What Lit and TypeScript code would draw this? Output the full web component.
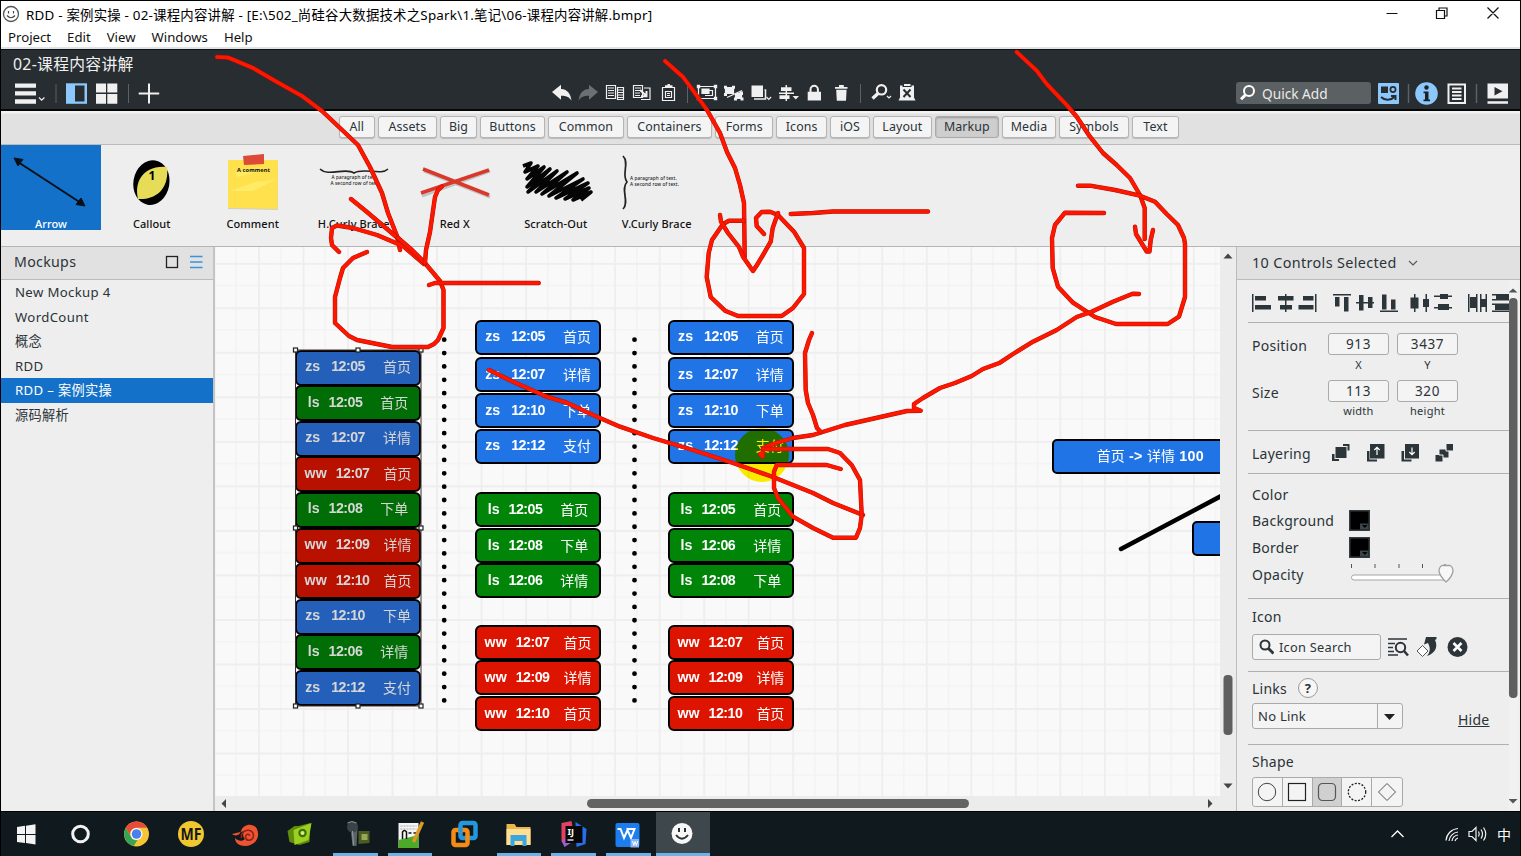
import { LitElement, html, svg, css } from "lit";
import { customElement } from "lit/decorators.js";
import { classMap } from "lit/directives/class-map.js";
import { styleMap } from "lit/directives/style-map.js";

type Tone = "blue" | "green" | "red";
type Row = [string, string, string];

const toneOf = (user: string): Tone => (user === "zs" ? "blue" : user === "ls" ? "green" : "red");

const A = "首页", B = "详情", C = "下单", D = "支付";

const events: Row[] = [
  ["zs", "12:05", A], ["ls", "12:05", A], ["zs", "12:07", B], ["ww", "12:07", A], ["ls", "12:08", C],
  ["ww", "12:09", B], ["ww", "12:10", A], ["zs", "12:10", C], ["ls", "12:06", B], ["zs", "12:12", D],
];

const zs: Row[] = [["zs", "12:05", A], ["zs", "12:07", B], ["zs", "12:10", C], ["zs", "12:12", D]];
const ww: Row[] = [["ww", "12:07", A], ["ww", "12:09", B], ["ww", "12:10", A]];
const grouped: Row[] = [...zs, ["ls", "12:05", A], ["ls", "12:08", C], ["ls", "12:06", B], ...ww];
const sorted: Row[] = [...zs, ["ls", "12:05", A], ["ls", "12:06", B], ["ls", "12:08", C], ...ww];
const groupTops = [319.6, 357.3, 393, 428.6, 492.3, 527.8, 563.4, 624.8, 660.4, 696];

const tabs: [string, number][] = [
  ["All", 35.7], ["Assets", 59.3], ["Big", 37], ["Buttons", 65], ["Common", 76], ["Containers", 85], ["Forms", 58.4],
  ["Icons", 50.6], ["iOS", 40], ["Layout", 58.7], ["Markup", 64.3], ["Media", 54], ["Symbols", 70], ["Text", 47],
];

/* Pen strokes drawn over the whole window, in window coordinates. */
const strokes = [
  "217,57 228,57.5 253,68 277,82 302,96 322,111 340,128 358,145 370,167 382,193 388,213 397,236 400,250",
  "351,199 367,212 400,240 424,262 440,281 443.5,290 443.5,328 438,340 434,344 428,347 392,347 357,340 349,336 335,323 335,297 340,278 343,268 353,258 367,252",
  "339,252 332,245 331,238 332,228 337,225.5 353,228 377,235 403,246 424,264",
  "398,238 412,250 425,263",
  "441.7,186.7 438,190 435,197 432.7,213 430,232 426,250 425,263",
  "429,285 435,283 538.7,283",
  "665,61 683,77 692,89 707,110 720,133 727,152 735,168 740,185 744,203 744.7,257",
  "744,220.7 729,220.7 723,224 712,240 708.7,253 706.7,277 710.7,297 725,310.7 738,316 781.7,316 793,308 804,294 804,248 794,231.7 778,215 770,211.7 761.7,212 756,218 756.7,226 764,234",
  "720,215 721,221.7 728,233 739,247 743,256.7 753,271 757,265 763,255 770.7,241.7 772.7,228 778,213",
  "790.7,214 813,213 833,211.5 928,211.5",
  "1016.7,52 1036.7,70.7 1046.7,84 1066.7,105 1076.7,116.7 1090,136.7 1103,153 1116.7,165 1130,178 1140,195 1144.7,208 1144.7,239",
  "1135,226.7 1136,234 1146.7,251.5 1149.5,251.5 1150.7,240 1153,230",
  "1078,185.7 1090,185.7 1115,190 1140,195.7 1155,201.7 1166.7,214 1178,225 1184,238 1185,244 1185,297 1179,316.7 1167.7,324 1116,324 1095,317 1073,302.7 1058,286.7 1052.7,268 1052,238 1055,225 1065,212.7 1104,213",
  "1139,294 1132.7,293.7 1113,301.7 1091.7,311.7 1076.7,317 1056.7,330 1033,341.7 1013,354 1000,362.7 983,369 971.7,376 955,383 940,388 923,398 914,404 914,408 920.7,410.7 907,411 845,425 813,435 793,438 773,444 763,448 762.7,456.7 760,454",
  "812,333 809,340 805,353 805.7,390 808,403 813,415 817,428 820.7,431.7",
  "489,370 513,381.7 546.7,396.7 566.7,402.7 593,415 620,426.7 653,438 693,450 733,463 773,477 813,493 833,503 863,515",
  "763,449 828,449 840,453 851.7,465 860,480 861.7,515 860,528 856,537.7 833,537.7 813,528 793,516.7 778,498 774,488 774,471.7 776.7,465 826.7,465 840.7,469",
];

@customElement("event-card")
class EventCard extends LitElement {
  static properties = { row: { attribute: false }, selected: { type: Boolean } };
  declare row: Row;
  declare selected: boolean;
  static styles = css`
    :host { display: block; }
    .card { box-sizing: border-box; width: 125.5px; height: 35px; border: 2px solid #000; border-radius: 6px; color: #fff; padding-bottom: 1.5px;
      display: flex; align-items: center; justify-content: center; font: bold 14.2px "Liberation Sans", sans-serif; white-space: pre; }
    .blue { background: #2074e6; } .green { background: #008509; } .red { background: #dd1400; }
    .user { margin-right: 11px; }
    .green .user { margin-right: 9px; }
    .red .user { margin-right: 9px; }
    .time { letter-spacing: -0.5px; margin-right: 18px; }
    .red .time { margin-right: 14px; }
    .act { font: 14px "Noto Sans CJK SC", sans-serif; line-height: 20px; }
    .selected { color: #d6d6d6; height: 36px; padding-bottom: 3px; }
    .selected.blue { background: #2460b9; } .selected.green { background: #006d06; } .selected.red { background: #b81100; }
  `;
  render() {
    const [user, time, act] = this.row;
    return html`<div class=${classMap({ card: true, [toneOf(user)]: true, selected: this.selected })}><span class="user">${user}</span><span class="time">${time}</span><span class="act">${act}</span></div>`;
  }
}

@customElement("app-root")
class AppRoot extends LitElement {
  static styles = css`
    :host { display: block; }
    * { box-sizing: border-box; }
    svg { display: block; flex: none; }
    .win { position: relative; width: 1521px; height: 856px; overflow: hidden; background: #eee; border: 1px solid #000; border-bottom: 0;
      display: flex; flex-direction: column; font-family: "Noto Sans", "Noto Sans CJK SC", sans-serif; color: #2b3338; }
    .title { height: 25px; background: #fff; color: #000; display: flex; align-items: center; font-size: 13.4px; justify-content: space-between; flex: none; }
    .title .name { display: flex; align-items: center; gap: 6px; padding-left: 1px; letter-spacing: 0.22px; white-space: pre; }
    .menu { height: 23px; background: #fff; color: #111; display: flex; gap: 16px; padding: 1px 0 0 7px; font-size: 13.2px; line-height: 21px; border-bottom: 2px solid #dfe3e5; flex: none; }
    .dark { height: 62px; background: #272d31; border-top: 1px solid #0e1214; border-bottom: 2px solid #050606; flex: none; color: #fff; display: flex; flex-direction: column; }
    .doc { height: 30px; padding: 2px 0 0 12px; font-size: 15.8px; letter-spacing: 0.3px; line-height: 24px; color: #f0f0f0; }
    .tools { height: 28px; display: flex; }
    .quick { display: flex; align-items: center; margin-top: 2px; width: 135px; height: 22px; border-radius: 3px; background: #5b6063; color: #eaeaea; font-size: 13.7px; gap: 6px; padding-left: 4px; }
    .rtools { display: flex; margin-left: auto; }
    .tabs { height: 34px; background: linear-gradient(#f2f2f2 0 2px, #e1e1e1 3px); border-bottom: 1px solid #bbb; display: flex; gap: 3px; padding: 5px 0 0 338px; flex: none; }
    .tab { height: 22px; flex: none; border: 1px solid #b4b4b4; border-radius: 3px; background: #f4f4f4; box-shadow: 0 1px 1px #bbb; font-size: 12.4px; line-height: 19px; text-align: center; letter-spacing: 0.1px; white-space: nowrap; }
    .tab.on { background: #cecece; box-shadow: inset 0 1px 2px #999; border-color: #aaa; }
    .lib { height: 102px; display: flex; border-bottom: 1px solid #b5b5b5; flex: none; }
    .item { width: 101px; height: 85px; display: flex; flex-direction: column; align-items: center; color: #111; font-size: 11px; line-height: 14px; font-weight: 500; letter-spacing: 0.1px; white-space: nowrap; padding-right: 1.5px; }
    .item.sel { background: #1471c9; color: #fff; width: 100px; margin-right: 1px; padding: 0; }
    .item svg { height: 72px; }
    .main { height: 564px; display: flex; flex: none; }
    .side { width: 214px; border-right: 2px solid #c4c4c4; font-size: 13.2px; flex: none; }
    .shead { height: 33px; background: #e1e1e1; border-bottom: 1px solid #bbb; display: flex; align-items: center; padding: 0 9px 3px 13px; font-size: 14.2px; letter-spacing: 0.3px; justify-content: space-between; }
    .row { height: 24.5px; padding-left: 14px; line-height: 24px; letter-spacing: 0.35px; }
    .row.on { background: #1471c9; color: #fff; }
    .work { width: 1022px; display: flex; flex-direction: column; border-right: 1px solid #bcbcbc; flex: none; }
    .wtop { display: flex; height: 549px; }
    .canvas { position: relative; width: 1005px; height: 549px; overflow: hidden; background: #f9f9f9; isolation: isolate; flex: none; }
    .layer { position: absolute; left: 0; top: 0; }
    event-card { position: absolute; }
    .wide { position: absolute; height: 35px; border: 2px solid #000; border-radius: 5px; background: #2074e6; color: #fff; font: bold 14.3px "Liberation Sans", sans-serif; line-height: 31px; text-align: center; white-space: pre; letter-spacing: 0.3px; }
    .cjk { font: 14px "Noto Sans CJK SC", sans-serif; letter-spacing: 0; line-height: 20px; }
    .spot { position: absolute; left: 519.5px; top: 181px; width: 54px; height: 54px; border-radius: 50%; background: #fff000; mix-blend-mode: multiply; }
    .hbar { height: 15px; background: #ececec; }
    .props { width: 283px; }
    .phead { height: 33px; background: #e1e1e1; border-bottom: 1px solid #bbb; display: flex; align-items: center; gap: 11px; padding: 0 0 1px 15px; font-size: 14.4px; letter-spacing: 0.35px; white-space: nowrap; }
    .pbody { display: flex; height: 531px; overflow: hidden; }
    .psecs { width: 272px; padding-left: 11px; font-size: 14px; letter-spacing: 0.25px; }
    .sec { border-bottom: 1px solid #b0b0b0; padding-left: 4px; overflow: hidden; }
    .s43 { height: 43px; } .s108 { height: 108px; padding-top: 10px; } .s125 { height: 125px; padding-top: 7px; } .s73 { height: 73px; padding-top: 6px; }
    .line { display: flex; align-items: center; }
    .lab { width: 76px; height: 20px; line-height: 24px; }
    .wlab { width: 97px; }
    .h26 { height: 26px; } .h27 { height: 27px; line-height: 20px; }
    .t2 { margin-top: 2px; } .t3 { margin-top: 3px; } .t4 { margin-top: 4px; } .t5 { margin-top: 5px; } .t8 { margin-top: 8px; }
    .num { width: 61px; height: 22px; border: 1px solid #aaa; border-radius: 3px; background: #f4f4f4; text-align: center; font-size: 13.5px; line-height: 20px; letter-spacing: 0.6px; margin-right: 8px; }
    .sub { width: 61px; margin-right: 8px; text-align: center; font-size: 11px; line-height: 14px; }
    .sub.gap { width: 76px; margin: 0; }
    .field { height: 26px; width: 129px; border: 1px solid #aaa; border-radius: 3px; background: #f4f4f4; display: flex; align-items: center; font-size: 12.8px; gap: 5px; padding-left: 6px; white-space: nowrap; }
    .help { width: 20px; height: 20px; border: 1px solid #999; border-radius: 50%; background: #f6f6f6; text-align: center; font-weight: bold; font-size: 13px; line-height: 18px; margin-left: 11px; }
    .select { width: 151px; height: 26px; border: 1px solid #aaa; border-radius: 3px; background: #f4f4f4; display: flex; align-items: center; justify-content: space-between; font-size: 13px; padding-left: 5px; }
    .hide { text-decoration: underline; margin-left: 55px; margin-top: 6px; }
    .last { padding: 6px 0 0 4px; line-height: 21px; }
    .shapes { display: flex; width: 151px; height: 30px; border: 1px solid #aaa; border-radius: 3px; background: #f4f4f4; margin-top: 5px; }
    .shape { width: 30px; height: 28px; border-right: 1px solid #aaa; display: flex; align-items: center; justify-content: center; }
    .shape:last-child { border: 0; }
    .shape.on { background: #d0d0d0; }
    .task { height: 45px; background: #10191d; border-top: 1px solid #000; flex: none; display: flex; justify-content: space-between; }
    .apps { display: flex; }
    .app { width: 54.55px; height: 44px; display: flex; flex-direction: column; align-items: center; padding: 0 5px; }
    .app svg { height: 41px; }
    .run { border-bottom: 3px solid #6cb2e6; width: 44.55px; margin: 0 5px; padding: 0; }
    .cur { background: #3e474c; border-bottom: 3px solid #6cb2e6; width: 54px; }
    .tray { display: flex; align-items: center; color: #fff; font-size: 14px; padding-right: 9px; }
    .ink { position: absolute; left: -1px; top: -1px; pointer-events: none; }
  `;

  private dark(body: unknown, x: number, w: number) {
    return html`<svg width=${w} height="28" viewBox="${x} 80 ${w} 28">${body}</svg>`;
  }

  private header() {
    const W = "#f0f0f0";
    return html`<div class="dark">
      <div class="doc">02-课程内容讲解</div>
      <div class="tools">
        ${this.dark(svg`
          <path fill=${W} d="M15 83.500h21v4.200H15zM15 91.200h21v4.400H15zM15 99.300h21v4.400H15zM96 83.500h10v9H96zM107.300 83.500h10v9h-10zM96 94h10v9.800H96zM107.300 94h10v9.800h-10z"/>
          <path d="M39 97.500l2.700 2.700 2.700-2.700" fill="none" stroke=${W} stroke-width="1.200"/>
          <path d="M138.700 93.500h20.500M149 83.500v20" stroke=${W} stroke-width="2"/>
          <path d="M56 84v19M128.500 84v19" stroke="#5b6165"/>
          <rect x="66" y="83.300" width="21" height="20.500" fill="#8cc8fb"/><rect x="75" y="85.500" width="9.500" height="16" fill="#272d31"/>`, 1, 549)}
        ${this.dark(svg`
          <path fill=${W} d="M552 92l9-7.300v4.300c7 .5 9.500 5 10.500 11.500-3-4-6-4.800-10.500-4.700v4z"/>
          <path fill="#6b7073" d="M598 92l-9-7.300v4.300c-7 .5-9.500 5-10.500 11.500 3-4 6-4.800 10.500-4.700v4z"/>
          <g fill="none" stroke=${W} stroke-width="1.200">
            <path d="M606.500 85.500h9v13h-9zM617.500 87.500h6v12h-6zM608 88h6M608 90.500h6M608 93h6M608 95.500h6M618 90h5M618 92.500h5M618 95h5M618 97.500h5"/>
            <path d="M633.500 85.500h9v12h-9zM635 88h6M635 90.500h5M635 93h5M635 95.500h5M644 88h6v11.500h-9"/><path d="M640 90l6.500 6M646.500 91v5.300H641" stroke-width="2"/>
            <path d="M662.500 87.500h12v13h-12zM665.500 91.500h6v6h-6zM667 93.500h3M667 95.500h3"/><path d="M665 86.500h7.500M668.700 84v3" stroke-width="2.400"/>
            <path d="M698.500 86.500h17v12h-17z"/><path d="M705 95.500h7.500v-5H709"/><path d="M702 89h7v4.500h-7z" fill=${W}/>
            <path d="M725.500 87.500h8v6h-8zM735.500 93.500h6v5h-6z" fill=${W}/><path d="M727 97.500l15-7"/>
            <path d="M764.500 90h1v9H754" stroke-width="1.500"/><path d="M766.500 97l2.300 2.300 2.300-2.300M887 96l2 2 2-2"/>
            <path d="M786.300 85v16M779 93.300h15" stroke-width="1.500"/>
            <path d="M810.500 93v-3.500a3.700 3.700 0 0 1 7.400 0v3.500" stroke-width="2"/>
            <circle cx="881.500" cy="89.800" r="4.700" stroke-width="2.200"/><path d="M878 93.500l-5.500 5" stroke-width="3.400"/>
          </g>
          <g fill=${W}><path d="M696.800 84.800h3.400v3.400h-3.400zM713.800 84.800h3.400v3.400h-3.400zM696.800 96.800h3.400v3.400h-3.400zM713.800 96.800h3.400v3.400h-3.400zM724 85.800h3v3h-3zM732 85.800h3v3h-3zM724 93h3v3h-3zM739.500 91.500h3.500v3.500h-3.500zM734 97.500h3v3h-3zM740.500 97.500h3v3h-3z"/>
            <path d="M751.500 85.500h11.500v11.500h-11.500zM781 87.300h10.500v3.800H781zM779.500 95.300h10v3.800h-10zM792.500 96h6.500l-3.200 3.500zM807.700 91.800h13.300v8.800h-13.300zM835 87h12.500v1.700H835zM839 85h4.800v2H839zM836.200 89.800h10.400l-.6 11h-9.200z"/>
            <path d="M900 85.500h14v12l1.500 3h-17l1.500-3z"/></g>
          <path d="M903.500 89.500l7 7.500M910.500 89.500l-7 7.500M902.500 86h9" stroke="#272d31" stroke-width="2" fill="none"/><path d="M904 85h6.500" stroke=${W} stroke-width="2"/>
          <path d="M687.500 84v19M860.500 84v19" stroke="#5b6165"/>`, 550, 368)}
        <div class="rtools">
          <div class="quick"><svg width="16" height="18" viewBox="0 0 16 18"><circle cx="9" cy="7" r="5" fill="none" stroke="#fff" stroke-width="2"/><path d="M5.500 10.800L1 15.300" stroke="#fff" stroke-width="3"/></svg>Quick Add</div>
          ${this.dark(svg`
            <rect x="1378" y="83" width="21" height="21" rx="1" fill="#8cc8fb"/><path d="M1381 86.500h7v6.500h-7z" fill="#272d31"/><circle cx="1393" cy="89.500" r="2.600" fill="none" stroke="#272d31" stroke-width="1.700"/><path d="M1381 97c4 4 10 3.500 14-.5M1391 96h4.500v4" fill="none" stroke="#272d31" stroke-width="2"/>
            <path d="M1408.500 84v19M1476.500 84v19" stroke="#5b6165" stroke-width="1.500"/>
            <circle cx="1426.500" cy="93.500" r="11.300" fill="#8cc8fb"/><circle cx="1426.500" cy="87.500" r="2.200" fill="#1c2226"/><path d="M1423.500 91.500h5v8h1.500v1.700h-6.500v-1.700h1.500v-6.300h-1.500z" fill="#1c2226"/>
            <path d="M1448.500 84.500h16.500v18.500h-16.500zM1452 88.500h9.500M1452 92h9.500M1452 95.500h9.500M1452 99h9.500" fill="none" stroke=${W} stroke-width="2"/>
            <path d="M1487.500 83.500h20.500v15h-20.500zM1487.500 101.300h20.500v2.400h-20.500z" fill=${W}/><path d="M1494.500 87l8 4.200-8 4.200z" fill="#272d31"/>`, 1371, 149)}
        </div>
      </div>
    </div>`;
  }

  private library() {
    const note = (x: number, y: number, a: string) => svg`<text x=${x} y=${y} text-anchor=${a} font-size="4.700" fill="#222">A paragraph of text.<tspan x=${x} dy="5.800">A second row of text.</tspan></text>`;
    const items: [string, unknown][] = [
      ["Arrow", svg`<path d="M17 17L80 58" stroke="#061018" stroke-width="2"/><path d="M13 13l9 1.500-5 6.500zM84 61l-9-1.500 5-6.500z" stroke="#061018" fill="#061018"/>`],
      ["Callout", svg`<ellipse cx="49.500" cy="37.500" rx="18" ry="22.500" fill="#000" transform="rotate(10 49 37)"/><path d="M36 54C32 38 40 20 65 22c2 18-7 33-29 32z" fill="#e6dc58"/><text x="50" y="35" font-size="12" font-weight="bold" text-anchor="middle">1</text>`],
      ["Comment", svg`<path d="M26 16l49 1v48l-50-1z" fill="#bbb" opacity=".6"/><path d="M25 15h50l-.5 49-49.500-1z" fill="#ffe14e"/><path d="M27 46l25-9 20-2-22 11zM32 27l30-2-28 7z" fill="#fff176" opacity=".6"/><path d="M40 11l21-2v10l-20 1z" fill="#dd4a37"/><text x="50.500" y="27" font-size="5.600" font-weight="bold" text-anchor="middle" fill="#111">A comment</text>`],
      ["H.Curly Brace", svg`<path d="M16 24c8 8 26-2 34 4 9-6 27 3 34-4" fill="none" stroke="#222" stroke-width="1.600"/>${note(51, 34, "middle")}`],
      ["Red X", svg`<path d="M18 25l66 26M16 50l68-25" stroke="#999" stroke-width="3" transform="translate(1 1)" opacity=".5"/><path d="M18 24l66 26M16 48l68-23" stroke="#d8392a" stroke-width="3.500"/>`],
      ["Scratch-Out", svg`<path d="M17 21l8-3-6 9 13-6-11 13 17-12-17 20 23-18-22 23 29-21-21 21 31-20-25 22 35-21-28 23 34-17-27 19 32-15-23 16 24-11-16 12 18-8-10 8" fill="none" stroke="#050505" stroke-width="3.600" stroke-linejoin="round"/>`],
      ["V.Curly Brace", svg`<path d="M16 11c7 7-2 19 4 26-7 7 3 20-4 27" fill="none" stroke="#222" stroke-width="1.700"/>${note(23, 35, "start")}`],
    ];
    return html`<div class="lib">${items.map(([n, g], i) => html`<div class=${classMap({ item: true, sel: i === 0 })}>
      <svg width="100" height="72" viewBox="0 0 100 72">${g}</svg>${n}</div>`)}</div>`;
  }

  private card(row: Row, x: number, y: number, selected = false) {
    return html`<event-card .row=${row} ?selected=${selected} style=${styleMap({ left: `${x - 215}px`, top: `${y - 247}px` })}></event-card>`;
  }

  private workspace() {
    const dots = (x: number) => svg`<path d="M${x} 339.700V701" stroke="#000" stroke-width="4.800" stroke-linecap="round" stroke-dasharray="0 13.360"/>`;
    const handles = [[295.5, 350], [358, 350], [421, 350], [295.5, 528], [421, 528], [295.5, 706], [358, 706], [421, 706]];
    return html`<div class="work">
      <div class="wtop">
        <div class="canvas">
          <svg class="layer" width="1005" height="549" viewBox="215 247 1005 549">
            <defs><pattern id="grid" x="258" y="262.800" width="44.520" height="44.520" patternUnits="userSpaceOnUse">
              <path d="M22.700 0v44.520M0 22.700h44.520" stroke="#f2f2f2" stroke-width="1.300"/><path d="M1 0v44.520M0 1h44.520" stroke="#eee" stroke-width="1.800"/></pattern></defs>
            <rect x="215" y="247" width="1005" height="549" fill="url(#grid)"/>
            ${dots(444.2)}${dots(634.5)}
            <path d="M1121 549L1225 494" stroke="#000" stroke-width="4.500" stroke-linecap="round"/>
          </svg>
          ${events.map((r, i) => this.card(r, 295.3, 349.5 + i * 35.62, true))}
          ${grouped.map((r, i) => this.card(r, 475.3, groupTops[i]))}
          ${sorted.map((r, i) => this.card(r, 668.2, groupTops[i]))}
          <div class="wide" style=${styleMap({ left: "837.3px", top: "191.5px", width: "196px" })}><span class="cjk">首页</span> -&gt; <span class="cjk">详情</span> 100</div>
          <div class="wide" style=${styleMap({ left: "976.5px", top: "274px", width: "120px" })}></div>
          <svg class="layer" width="1005" height="549" viewBox="215 247 1005 549">
            <rect x="295.500" y="350" width="125.500" height="356" fill="none" stroke="#3a302a"/>
            ${handles.map(([x, y]) => svg`<rect x=${x - 2} y=${y - 2} width="4" height="4" fill="#fff" stroke="#222" stroke-width="1.200"/>`)}
          </svg>
          <div class="spot"></div>
        </div>
        <svg width="16" height="549" viewBox="1220 247 16 549"><rect x="1220" y="247" width="16" height="549" fill="#ececec"/><path d="M1223.500 258.500l4.500-5 4.500 5zM1223.500 783.500l4.500 5 4.500-5z" fill="#444"/><rect x="1223.500" y="675" width="9" height="60" rx="4" fill="#5f5f5f"/></svg>
      </div>
      <svg class="hbar" width="1021" height="15" viewBox="215 796 1021 15"><path d="M226 799v9l-4.500-4.500zM1208 799v9l4.500-4.500z" fill="#444"/><rect x="587" y="799" width="382" height="9" rx="4.500" fill="#636363"/></svg>
    </div>`;
  }

  private props() {
    const K = "#2c3539";
    return html`<div class="props">
      <div class="phead">10 Controls Selected<svg width="10" height="6"><path d="M1 1l4 4 4-4" fill="none" stroke="#555" stroke-width="1.100"/></svg></div>
      <div class="pbody"><div class="psecs">
        <div class="sec s43">
          <svg width="258" height="43" viewBox="1252 280 258 43"><g fill=${K}>
            <path d="M1252 294h1.500v18h-1.500zM1255 296h11v4.500h-11zM1255 305h16v4.500h-16zM1285 294h1.500v18h-1.500zM1278 296h15.500v4.500H1278zM1280 305h12v4.500h-12zM1315 294h1.500v18h-1.500zM1303 296h10.500v4.500H1303zM1298.500 305h15v4.500h-15z"/>
            <path d="M1333 294h18v1.500h-18zM1335 297h4.500v9.500h-4.500zM1344 297h4.500v14.500h-4.500zM1356 302h18v1.500h-18zM1359 295h4.500v15.500h-4.500zM1368 297h4.500v11h-4.500zM1380 310.500h18v1.500h-18zM1382 294.500h4.500v15h-4.500zM1391 299.500h4.500v10h-4.500z"/>
            <path d="M1410.500 297.500h8v11h-8zM1414 294h1.500v18h-1.500zM1423 299h6v8h-6zM1425.500 294h1.500v18h-1.500zM1434 295.500h18v1.500h-18zM1440 294h8v5h-8zM1438 304h11v6h-11zM1434 307h18v1.500h-18z"/>
            <path d="M1468 294h1.500v18h-1.500zM1470 297h6v11h-6zM1476 294h1.500v18h-1.500zM1480 294h1.500v18h-1.500zM1481 299h5v8h-5zM1485.500 294h1.500v18h-1.500zM1492 294h18v1.500h-18zM1496 295h14v4h-14zM1492 299h18v1.500h-18zM1492 303.500h18v1.500h-18zM1495 305h15v5h-15zM1492 310.500h18v1.500h-18z"/></g></svg>
        </div>
        <div class="sec s108">
          <div class="line"><span class="lab">Position</span><span class="num">913</span><span class="num">3437</span></div>
          <div class="line t3"><span class="sub gap"></span><span class="sub">X</span><span class="sub">Y</span></div>
          <div class="line t8"><span class="lab">Size</span><span class="num">113</span><span class="num">320</span></div>
          <div class="line t2"><span class="sub gap"></span><span class="sub">width</span><span class="sub">height</span></div>
        </div>
        <div class="sec line s43"><span class="lab">Layering</span>
          <svg width="128" height="22" viewBox="1328 441 128 22"><g fill=${K}>
            <path d="M1335.500 447h11v11h-11zM1343 444h6.500v6.500h-2v-4.500H1343zM1332 454v7h7v-2h-4.500v-5z"/>
            <path d="M1370 444h14.500v14.500H1370zM1367 451v10.500h10v-2h-7.500V451zM1405 444h14v14.500h-14zM1401.500 451v10.500h10v-2H1404V451z"/>
            <path d="M1446.500 444h6.500v6.500h-6.500zM1439.500 449.500h9v8h-9zM1435.500 455h7v6.500h-7z"/></g>
            <path d="M1439 455h4v3M1446 448.500v2.500h3" stroke="#eee" fill="none"/>
            <path d="M1377 455v-7M1374.300 450l2.700-2.700 2.700 2.700M1412 447.500v7M1409.300 452l2.700 2.700 2.700-2.700" stroke="#fff" fill="none" stroke-width="1.200"/></svg></div>
        <div class="sec s125">
          <div class="line h26">Color</div>
          <div class="line h27"><span class="wlab">Background</span>${this.swatch()}</div>
          <div class="line h27"><span class="wlab">Border</span>${this.swatch()}</div>
          <div class="line h27"><span class="wlab">Opacity</span>
            <svg width="108" height="27" viewBox="1349 561 108 27"><path d="M1351.500 564v4M1375 564v4M1399 564v4M1422.500 564v4M1445 564v4" stroke="#555"/><rect x="1351.500" y="575" width="98" height="5" rx="2.500" fill="#fff" stroke="#a5a5a5"/><path d="M1442 565.500h8q3 1.500 3 6-1.500 6-7 10.500-5.500-5-7-10.500 0-4.500 3-6z" fill="#f8f8f8" stroke="#a0a0a0" stroke-width="1.300"/></svg></div>
        </div>
        <div class="sec s73">
          <div class="h27 t2">Icon</div>
          <div class="line"><div class="field"><svg width="15" height="16"><circle cx="6" cy="6" r="4.500" fill="none" stroke=${K} stroke-width="2"/><path d="M9.500 9.500l5 5" stroke=${K} stroke-width="3"/></svg>Icon Search</div>
            <svg width="90" height="24" viewBox="1381 635 90 24"><path d="M1388 639h19M1388 643.500h7M1388 647.500h5M1388 651.500h6M1388 655h10" stroke=${K} stroke-width="1.700"/><circle cx="1400.500" cy="647.500" r="4.700" fill="none" stroke=${K} stroke-width="2"/><path d="M1404 651l4 4.500" stroke=${K} stroke-width="2.500"/>
            <path d="M1422.500 645.500l5.500 5.500-5.500 5.500-5.500-5.500z" fill="#fff" stroke="#555"/><path d="M1426 637h10.500v2l-1.500 1c3 6 1 13-8 16 4-5 3-9 1-13l-4 1.500z" fill=${K}/>
            <circle cx="1457.500" cy="647" r="10" fill=${K}/><path d="M1453.500 643l8 8M1461.500 643l-8 8" stroke="#fff" stroke-width="2.600"/></svg></div>
        </div>
        <div class="sec s73">
          <div class="line h22">Links<span class="help">?</span></div>
          <div class="line t5"><div class="select">No Link<svg width="25" height="24"><path d="M.5 0v24" stroke="#aaa"/><path d="M7 10h11l-5.500 6z" fill="#222"/></svg></div><span class="hide">Hide</span></div>
        </div>
        <div class="last">Shape
          <div class="shapes">
            <span class="shape"><svg width="20" height="20"><circle cx="10" cy="10" r="8.700" fill="none" stroke="#444"/></svg></span>
            <span class="shape"><svg width="20" height="20"><rect x="1.500" y="1.500" width="17" height="17" fill="none" stroke="#222" stroke-width="1.200"/></svg></span>
            <span class="shape on"><svg width="20" height="20"><rect x="1.500" y="1.500" width="17" height="17" rx="4" fill="none" stroke="#555" stroke-width="1.200"/></svg></span>
            <span class="shape"><svg width="20" height="20"><circle cx="10" cy="10" r="8.700" fill="none" stroke="#222" stroke-width="1.300" stroke-dasharray="2 1.500"/></svg></span>
            <span class="shape"><svg width="20" height="20"><path d="M10 1.500l8.500 8.500-8.500 8.500L1.500 10z" fill="none" stroke="#555"/></svg></span>
          </div></div>
      </div>
      <svg width="11" height="531" viewBox="1509 280 11 531"><rect x="1509" y="280" width="9" height="531" fill="#f1f1f1"/><path d="M1508.500 292.500l4.500-4 4.500 4zM1508.500 799l4.500 4.500 4.500-4.500z" fill="#555"/><rect x="1509" y="298" width="8.500" height="400" rx="4" fill="#5f5f5f"/></svg>
      </div></div>`;
  }

  private swatch() {
    return html`<svg width="21" height="21"><rect width="21" height="21" fill="#333d42"/><rect x="1.500" y="1.500" width="18" height="18" fill="#000"/><path d="M11 19.500v-6h8.500v6z" fill="#3b4448"/><path d="M13 15h5.500l-2.700 3z" fill="#000"/></svg>`;
  }

  private taskbar() {
    const apps: [string, unknown][] = [
      ["", svg`<path d="M11.500 16l8-1.200v8.200h-8zM20.500 14.700l9.500-1.400V23h-9.500zM11.500 24h8v8l-8-1.100zM20.500 24h9.500v9.500l-9.500-1.400z" fill="#f3f3f3"/>`],
      ["", svg`<circle cx="20" cy="23" r="7.800" fill="none" stroke="#f2f2f2" stroke-width="3"/>`],
      ["", svg`<circle cx="22" cy="23" r="12.500" fill="#f6c534"/><path d="M11.200 16.700A12.500 12.500 0 0 1 32.800 16.700H22a6 6 0 0 0-5.600 9z" fill="#e84b3c"/><path d="M11.200 16.700l5.400 9.300a6 6 0 0 0 6.500 3l-4 6A12.500 12.500 0 0 1 11.200 16.700z" fill="#36a457"/><circle cx="22" cy="23" r="6" fill="#fff"/><circle cx="22" cy="23" r="4.800" fill="#4a80ed"/>`],
      ["", svg`<circle cx="21.500" cy="23" r="13" fill="#f1c72f"/><text x="21.500" y="29" font-size="16" font-weight="bold" text-anchor="middle" textLength="21" lengthAdjust="spacingAndGlyphs" fill="#181818">MF</text>`],
      ["", svg`<path d="M8.500 23c4 3 8 1 9-3 2-7 12-9 16-2 4 9-3 17-12 17-7 0-10-4-10-8 3 3 7 4 10 1-4-4-1-10 4-9" fill="#ee5431"/><path d="M18 27c-2-8 11-11 12-3 0 6-7 7-8 2 0-3 4-4 4-1" fill="none" stroke="#8e2418" stroke-width="1.600"/>`],
      ["", svg`<path d="M9 20l7-5 4 0 12-3-1 19-10 3-10-3z" fill="#5f8c09"/><path d="M15 19l18-7-3 17-14 5z" fill="#9bcf20"/><circle cx="24" cy="22" r="4.200" fill="#3e6f07"/><circle cx="24" cy="22" r="2" fill="#d9f07c"/>`],
      ["run", svg`<path d="M17 17h7l-1 18h-4z" fill="#59646a"/><circle cx="19" cy="16" r="5.500" fill="#39444a"/><path d="M14 12q4-3 9 0M19 20l1 14" stroke="#999" fill="none"/><path d="M25 20h11v12l-11 1z" fill="#4d5a22"/><path d="M28 23h6v6h-6z" fill="#94a855"/>`],
      ["run", svg`<path d="M11 12h20v25H11z" fill="#f5f5f5"/><path d="M11 29l20-5v13H11z" fill="#4da928"/><path d="M13 15h16M13 18h16" stroke="#aaa" stroke-dasharray="2 1"/><path d="M15 28v-7q2-3 4 0v7M21 22h3M26 22h3" fill="none" stroke="#111" stroke-width="1.500"/><path d="M35 11L26 31" stroke="#dd9a25" stroke-width="3.500"/>`],
      ["", svg`<rect x="18" y="12" width="15" height="15" rx="2" fill="none" stroke="#2398df" stroke-width="4.500"/><rect x="11" y="19" width="14" height="15" rx="2" fill="none" stroke="#f38b17" stroke-width="4.500"/><path d="M18 21v-5" stroke="#2398df" stroke-width="4.500"/>`],
      ["run", svg`<path d="M10 13h8l2 3h14v18H10z" fill="#e7b74d"/><path d="M10 18h24v16H10z" fill="#ffe092"/><path d="M14 35v-11h16v11h-4v-5h-8v5z" fill="#3aa5df"/>`],
      ["run", svg`<path d="M10 12l10-2 2 12-8 11-4-3z" fill="#e14262"/><path d="M24 11l11 7-1 15-9 3z" fill="#2670ef"/><path d="M10 30l10-6 4 5-11 7z" fill="#a45dcb"/><path d="M14 15h17v17H14z" fill="#080808"/><text x="16" y="24" font-size="9" font-weight="bold" fill="#fff">IJ</text><path d="M16 29h6" stroke="#fff" stroke-width="1.300"/>`],
      ["run", svg`<rect x="10" y="12" width="24" height="24" rx="2" fill="#1c7eec"/><path d="M12 18h3l3.500 9 3.500-8 3.500 8 3.500-9h-8" fill="none" stroke="#fff" stroke-width="2"/><rect x="25" y="28" width="8.500" height="8.500" fill="#8ab5f4"/><path d="M27 30l1.300 4.500 1.300-4 1.300 4 1.300-4.500" fill="none" stroke="#fff"/>`],
      ["cur", svg`<circle cx="21.500" cy="22.500" r="10.500" fill="#f7f7f7"/><path d="M18.500 17v4M24.500 17v4M15.500 24q6 7.500 12 0" fill="none" stroke="#273035" stroke-width="2"/>`],
    ];
    return html`<div class="task"><div class="apps">${apps.map(([k, g]) => html`<div class="app ${k}"><svg width="44" height="41" viewBox="0.5 1 44 41">${g}</svg></div>`)}</div>
      <div class="tray"><svg width="107" height="44" viewBox="1390 812 107 44"><path d="M1391.500 837l6-6 6 6" fill="none" stroke="#fff" stroke-width="1.300"/>
        <g fill="none" stroke="#f0f0f0" stroke-width="1.200"><path d="M1446 840.500a13 13 0 0 1 12-12M1449 841a10 10 0 0 1 9-9M1452 841a7 7 0 0 1 6-6M1455 841a4 4 0 0 1 3-3" /><path d="M1469 831.500h3l4-4v13l-4-4h-3zM1478.500 831.500q1.500 2.500 0 5M1481 829.500q3 4.500 0 9M1483.500 827.500q4.500 6.500 0 13"/></g></svg>中</div></div>`;
  }

  render() {
    return html`<div class="win">
      <div class="title">
        <span class="name"><svg width="18" height="18" viewBox="0 0 18 18"><circle cx="9" cy="9" r="7.500" fill="#fff" stroke="#555" stroke-width="1.300"/><path d="M6.500 6v2.500M11.500 6v2.500M5 10.500q4 4.500 8 0" fill="none" stroke="#444" stroke-width="1.200"/></svg><span>RDD - 案例实操 - 02-课程内容讲解 - [E:\\502_尚硅谷大数据技术之Spark\\1.笔记\\06-课程内容讲解.bmpr]</span></span>
        <svg width="134" height="24" viewBox="1386 1 134 24"><path d="M1386.500 12.500h11M1436.500 9.500h8v8h-8zM1439 9.500v-2.500h8v8h-2.500M1487.500 6.500l11 11M1498.500 6.500l-11 11" fill="none" stroke="#111" stroke-width="1.200"/></svg>
      </div>
      <div class="menu"><span>Project</span><span>Edit</span><span>View</span><span>Windows</span><span>Help</span></div>
      ${this.header()}
      <div class="tabs">${tabs.map(([n, w]) => html`<div class=${classMap({ tab: true, on: n === "Markup" })} style=${styleMap({ width: `${w}px` })}>${n}</div>`)}</div>
      ${this.library()}
      <div class="main">
        <div class="side">
          <div class="shead"><span>Mockups</span><svg width="40" height="14"><rect x="2.500" y="1.500" width="11" height="11" fill="none" stroke="#222" stroke-width="1.300"/><path d="M26 1.500h12.500M26 7h12.500M26 12.500h12.500" stroke="#3b93d9" stroke-width="1.300"/></svg></div>
          ${["New Mockup 4", "WordCount", "概念", "RDD", "RDD – 案例实操", "源码解析"].map((n, i) => html`<div class=${classMap({ row: true, on: i === 4 })}>${n}</div>`)}
        </div>
        ${this.workspace()}
        ${this.props()}
      </div>
      ${this.taskbar()}
      <svg class="ink" width="1521" height="856" viewBox="0 0 1521 856" fill="none" stroke-linecap="round" stroke-linejoin="round">
        ${strokes.map((p) => svg`<polyline points=${p} stroke="#a81200" stroke-width="4.400"/><polyline points=${p} stroke="#ff1600" stroke-width="3.600"/>`)}
      </svg>
    </div>`;
  }
}
